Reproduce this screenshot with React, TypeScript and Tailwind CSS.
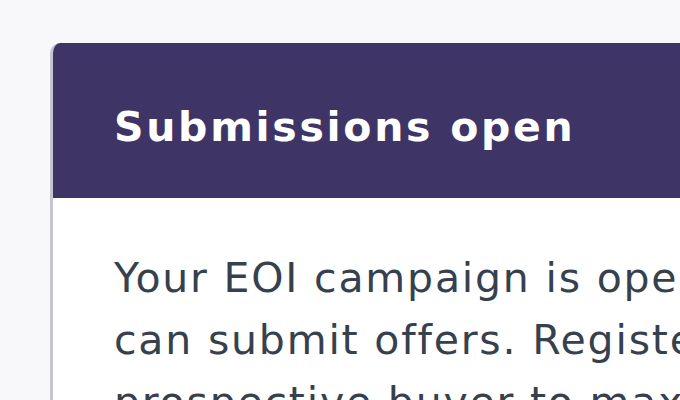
export default function App() {
  return (
    <div className="w-[680px] h-[400px] overflow-hidden bg-[#f8f8fb] pt-[43px] pl-[50px]" style={{ fontFamily: "'DejaVu Sans', Verdana, sans-serif" }}>
      <div className="w-[720px] h-[420px] rounded-tl-[10px] overflow-hidden bg-white border-l-[3px] border-[#c6c5d2]">
        {/* Header */}
        <div className="-ml-[3px] bg-[#3e3566] h-[155px] pl-[64px] pt-[59px]">
          <h1 className="text-white font-bold text-[41px] leading-[50px] tracking-[2.7px] whitespace-nowrap">
            Submissions open
          </h1>
        </div>

        {/* Body */}
        <div className="pl-[61px] pt-[49px] text-[#36414d] text-[41px] leading-[62px] tracking-[1.8px] whitespace-nowrap">
          <p>
            Your EOI campaign is open and buyers
            <br />
            can submit offers. Register each
            <br />
            prospective buyer to maximise interest
          </p>
        </div>
      </div>
    </div>
  );
}
